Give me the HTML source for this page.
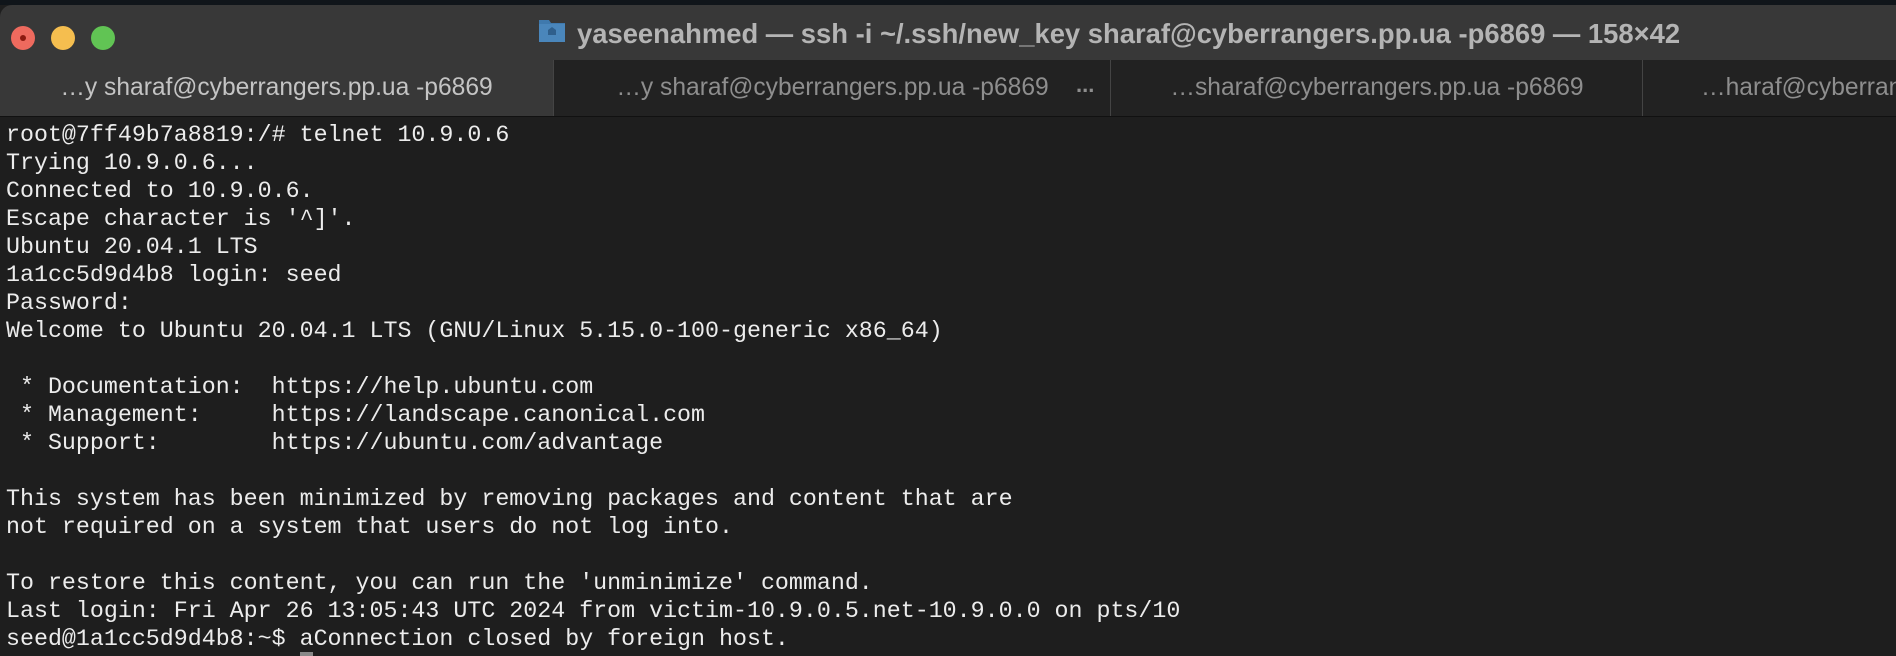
<!DOCTYPE html>
<html><head><meta charset="utf-8"><style>
html,body{margin:0;padding:0;width:1896px;height:656px;overflow:hidden;background:#1e1e1e}
.top{position:absolute;left:0;top:0;width:1896px;height:5px;background:#10151a}
.title{position:absolute;left:0;top:5px;width:1896px;height:55px;background:#383838;border-top-left-radius:12px}
.dot{position:absolute;top:21px;width:24px;height:24px;border-radius:50%}
.ttl{position:absolute;left:577px;top:13px;font:bold 27.4px "Liberation Sans",sans-serif;color:#b4b4b4;white-space:nowrap}
.tabs{position:absolute;left:0;top:60px;width:1896px;height:56px;background:#222;border-bottom:1px solid #111}
.tab{position:absolute;top:0;height:56px;font:24.6px "Liberation Sans",sans-serif;color:#8e8e8e;line-height:56px;text-align:center;white-space:nowrap;overflow:hidden;border-left:1px solid #444}
pre{position:absolute;left:6px;top:121px;margin:0;font:23.3px/28px "Liberation Mono",monospace;color:#ececec}
</style></head><body>
<div class="top"></div>
<div class="title">
<div class="dot" style="left:11px;background:#ee6a5e"><div style="position:absolute;left:9px;top:9px;width:6px;height:6px;border-radius:50%;background:#8c1a10"></div></div>
<div class="dot" style="left:51px;background:#f5be4f"></div>
<div class="dot" style="left:91px;background:#61c454"></div>
<svg style="position:absolute;left:538px;top:12px" width="28" height="26" viewBox="0 0 28 26"><path d="M1 3h10l2 3h14v19H1z" fill="#3f79ad"/><rect x="1" y="7" width="26" height="18" fill="#4a86bb"/><path d="M10 18v-5l4-3 4 3v5z" fill="#2f5f8c"/></svg>
<div class="ttl">yaseenahmed — ssh -i ~/.ssh/new_key sharaf@cyberrangers.pp.ua -p6869 — 158×42</div>
</div>
<div class="tabs">
<div class="tab" style="left:0;width:553px;background:#383838;color:#c4c4c4;border-left:none">…y sharaf@cyberrangers.pp.ua -p6869</div>
<div class="tab" style="left:553px;width:557px">…y sharaf@cyberrangers.pp.ua -p6869</div>
<div style="position:absolute;left:1076px;top:12px;font:bold 22px 'Liberation Sans',sans-serif;color:#8e8e8e">...</div>
<div class="tab" style="left:1110px;width:532px">…sharaf@cyberrangers.pp.ua -p6869</div>
<div class="tab" style="left:1642px;width:254px;text-align:left;padding-left:58px;box-sizing:border-box">…haraf@cyberrangers.pp.ua</div>
</div>
<pre>root@7ff49b7a8819:/# telnet 10.9.0.6
Trying 10.9.0.6...
Connected to 10.9.0.6.
Escape character is '^]'.
Ubuntu 20.04.1 LTS
1a1cc5d9d4b8 login: seed
Password:
Welcome to Ubuntu 20.04.1 LTS (GNU/Linux 5.15.0-100-generic x86_64)

 * Documentation:  https://help.ubuntu.com
 * Management:     https://landscape.canonical.com
 * Support:        https://ubuntu.com/advantage

This system has been minimized by removing packages and content that are
not required on a system that users do not log into.

To restore this content, you can run the 'unminimize' command.
Last login: Fri Apr 26 13:05:43 UTC 2024 from victim-10.9.0.5.net-10.9.0.0 on pts/10
seed@1a1cc5d9d4b8:~$ aConnection closed by foreign host.</pre>
<div style="position:absolute;left:300px;top:652px;width:13px;height:4px;background:#888"></div>
</body></html>
